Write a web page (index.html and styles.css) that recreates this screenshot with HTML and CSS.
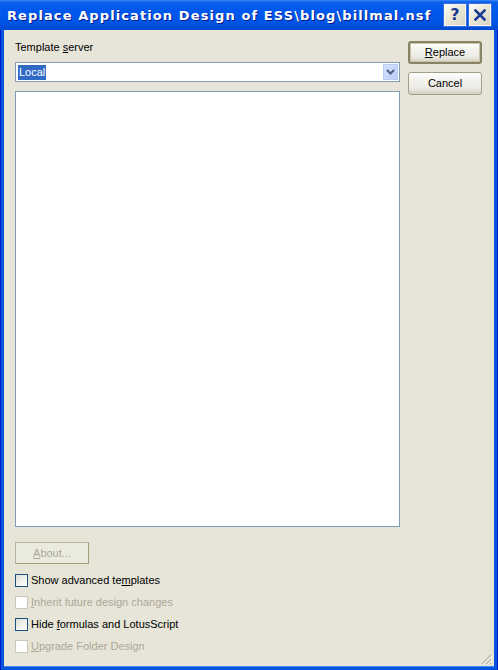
FILE: index.html
```html
<!DOCTYPE html>
<html>
<head>
<meta charset="utf-8">
<link rel="stylesheet" href="styles.css">
</head>
<body>
<div class="window">
  <div class="titlebar">
    <span class="title">Replace Application Design of ESS\blog\billmal.nsf</span>
    <div class="tb-buttons">
      <div class="tb-btn help">?</div>
      <div class="tb-btn close">
        <svg width="12" height="12" viewBox="0 0 12 12"><path d="M1.5 1.5 L10.5 10.5 M10.5 1.5 L1.5 10.5" stroke="#1a3a94" stroke-width="2.6" stroke-linecap="square"/></svg>
      </div>
    </div>
  </div>
  <div class="client">
    <div class="main">
      <div class="left">
        <div class="label">Template <u>s</u>erver</div>
        <div class="combo">
          <span class="sel">Local</span>
          <span class="arrow"><svg width="9" height="6" viewBox="0 0 9 6"><path d="M1 1 L4.5 4.5 L8 1" fill="none" stroke="#4d6185" stroke-width="2"/></svg></span>
        </div>
        <div class="list"></div>
        <div class="btn about disabled"><span><u>A</u>bout...</span></div>
        <div class="checks">
          <div class="check"><span class="box"></span><span>Show advanced te<u>m</u>plates</span></div>
          <div class="check off"><span class="box"></span><span><u>I</u>nherit future design changes</span></div>
          <div class="check"><span class="box"></span><span>Hide <u>f</u>ormulas and LotusScript</span></div>
          <div class="check off"><span class="box"></span><span><u>U</u>pgrade Folder Design</span></div>
        </div>
      </div>
      <div class="right">
        <div class="btn default"><span><u>R</u>eplace</span></div>
        <div class="btn"><span>Cancel</span></div>
      </div>
    </div>
    <div class="grip">
      <svg width="11" height="11" viewBox="0 0 11 11">
        <path d="M10 1 L1 10 M10 5 L5 10 M10 9 L9 10" stroke="#b8b5a3" stroke-width="1.2"/>
        <path d="M11 2 L2 11 M11 6 L6 11" stroke="#ffffff" stroke-width="1"/>
      </svg>
    </div>
  </div>
</div>
</body>
</html>
```
FILE: styles.css
```css
html, body {
  margin: 0;
  padding: 0;
  background: #0855dd;
}
.window {
  width: 498px;
  height: 670px;
  box-sizing: border-box;
  display: flex;
  flex-direction: column;
  background: linear-gradient(to right, #0019cf 0, #0019cf 1px, #0855dd 1px, #0855dd 497px, #0019cf 497px);
  font-family: "Liberation Sans", Arial, sans-serif;
  font-size: 11px;
  color: #000;
}
.titlebar {
  height: 30px;
  flex: none;
  display: flex;
  align-items: flex-start;
  justify-content: space-between;
  background: linear-gradient(to bottom, #3d8bf7 0, #0a5fea 2px, #0058ee 10px, #0055e5 22px, #0049d0 30px);
}
.title {
  margin: 8px 0 0 7px;
  font-family: "DejaVu Sans", Verdana, sans-serif;
  font-weight: bold;
  font-size: 13px;
  letter-spacing: 1.1px;
  line-height: 15px;
  color: #fff;
  text-shadow: 1px 1px 0 #0a1a8a;
  white-space: nowrap;
}
.tb-buttons {
  display: flex;
  gap: 3px;
  margin: 4px 7px 0 0;
}
.tb-btn {
  width: 22px;
  height: 22px;
  box-sizing: border-box;
  background: linear-gradient(135deg, #ffffff 0, #ece9d8 40%, #d8d4c4 100%);
  border: 1px solid #f6f4ec;
  outline: 1px solid #3a6fe0;
  display: flex;
  align-items: center;
  justify-content: center;
}
.help {
  font-family: "DejaVu Sans", Verdana, sans-serif;
  font-weight: bold;
  font-size: 16px;
  color: #1a3a94;
  line-height: 1;
}
.client {
  position: relative;
  flex: 1;
  margin: 0 4px 4px 4px;
  background: #e6e5d8;
  box-shadow: 0 1px 0 #3d8bf7;
  padding: 11px 12px 0 11px;
}
.main {
  display: flex;
  gap: 8px;
}
.left {
  width: 385px;
  display: flex;
  flex-direction: column;
}
.label {
  height: 13px;
  line-height: 13px;
}
.combo {
  margin-top: 8px;
  height: 20px;
  box-sizing: border-box;
  border: 1px solid #7f9db9;
  background: #fff;
  display: flex;
  align-items: center;
  justify-content: space-between;
}
.sel {
  margin-left: 2px;
  background: #316ac5;
  color: #fff;
  height: 15px;
  line-height: 15px;
  padding: 0 1px 0 1px;
}
.arrow {
  width: 15px;
  height: 16px;
  margin-right: 1px;
  box-sizing: border-box;
  background: linear-gradient(135deg, #d4e0fd 0, #bccffa 100%);
  border: 1px solid #b9cdf8;
  display: flex;
  align-items: center;
  justify-content: center;
}
.list {
  margin-top: 9px;
  height: 436px;
  box-sizing: border-box;
  border: 1px solid #7f9db9;
  background: #fff;
}
.btn {
  width: 74px;
  height: 23px;
  box-sizing: border-box;
  border: 1px solid #a29f88;
  border-radius: 3px;
  background: linear-gradient(to bottom, #ffffff 0, #f4f3ee 30%, #ecebe5 70%, #d6d0c5 100%);
  display: flex;
  align-items: center;
  justify-content: center;
  line-height: 13px;
}
.btn.default {
  border: 2px solid #8a8466;
  box-shadow: inset 0 0 0 1px #c9c5a8;
}
.btn.about {
  margin-top: 15px;
  height: 22px;
  border: 1px solid #b7b49c;
  border-right-color: #a19d7c;
  border-bottom-color: #a19d7c;
  border-radius: 0;
  background: #ebeadf;
}
.disabled {
  color: #aca899;
}
.right {
  width: 74px;
  display: flex;
  flex-direction: column;
  gap: 8px;
}
.checks {
  margin-top: 10px;
  display: flex;
  flex-direction: column;
  gap: 9px;
}
.check {
  display: flex;
  align-items: center;
  gap: 3px;
  height: 13px;
  line-height: 13px;
}
.box {
  width: 13px;
  height: 13px;
  box-sizing: border-box;
  border: 1px solid #1c5180;
  background: linear-gradient(135deg, #dcdcd7 0, #f2f2ee 55%, #ffffff 100%);
  flex: none;
}
.check.off {
  color: #aca899;
}
.check.off .box {
  border-color: #cac8bb;
  background: #fff;
}
.grip {
  position: absolute;
  right: 2px;
  bottom: 1px;
  width: 11px;
  height: 11px;
}
```
